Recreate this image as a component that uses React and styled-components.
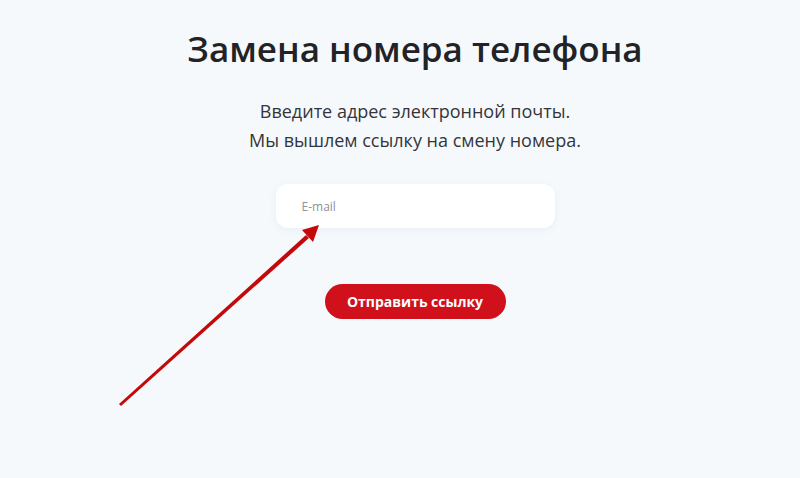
import React from "react";
import styled, { createGlobalStyle } from "styled-components";

const GlobalStyle = createGlobalStyle`
  html, body {
    margin: 0;
    padding: 0;
    background: #f6f9fc;
  }
  body {
    font-family: "Open Sans", "Liberation Sans", sans-serif;
  }
`;

const Page = styled.div`
  position: relative;
  width: 800px;
  height: 478px;
  overflow: hidden;
  background: #f6f9fc;
`;

const Content = styled.div`
  display: flex;
  flex-direction: column;
  align-items: center;
  padding: 26px 0 0 30px;
`;

const Title = styled.h1`
  margin: 0;
  font-size: 35px;
  font-weight: 600;
  color: #222326;
  letter-spacing: 0;
  line-height: 46px;
`;

const Lead = styled.p`
  margin: 25px 0 0;
  font-size: 18px;
  font-weight: 500;
  line-height: 29px;
  color: #33353a;
  text-align: center;
`;

const EmailInput = styled.input`
  box-sizing: border-box;
  margin-top: 29px;
  width: 279px;
  height: 44px;
  border: none;
  border-radius: 12px;
  background: #ffffff;
  box-shadow: 0 2px 8px rgba(30, 50, 90, 0.06);
  padding: 0 26px;
  font-family: inherit;
  font-size: 12px;
  color: #333;
  outline: none;

  &::placeholder {
    color: #8d929b;
  }
`;

const SubmitButton = styled.button`
  margin-top: 56px;
  width: 181px;
  height: 35px;
  border: none;
  border-radius: 18px;
  background: #d0101a;
  color: #ffffff;
  font-family: inherit;
  font-size: 14px;
  font-weight: 700;
  cursor: pointer;
`;

const ArrowLayer = styled.svg`
  position: absolute;
  left: 0;
  top: 0;
  pointer-events: none;
`;

function Arrow() {
  return (
    <ArrowLayer width="800" height="478" viewBox="0 0 800 478">
      <polygon points="119,404 121,406 309,238 306,235" fill="#c20a0a" />
      <polygon points="319,225 302,230 313,242" fill="#c20a0a" />
    </ArrowLayer>
  );
}

export default function App() {
  return (
    <Page>
      <GlobalStyle />
      <Content>
        <Title>Замена номера телефона</Title>
        <Lead>
          Введите адрес электронной почты.
          <br />
          Мы вышлем ссылку на смену номера.
        </Lead>
        <EmailInput type="email" placeholder="E-mail" />
        <SubmitButton type="button">Отправить ссылку</SubmitButton>
      </Content>
      <Arrow />
    </Page>
  );
}
